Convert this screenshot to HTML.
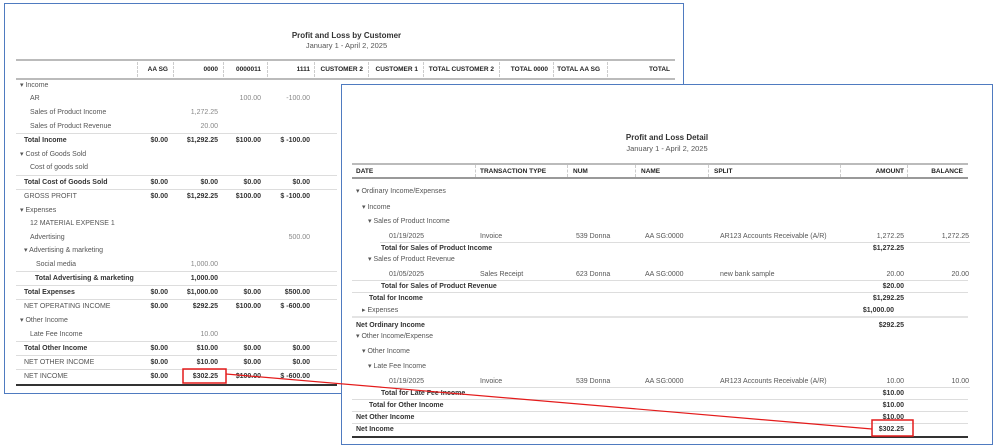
<!DOCTYPE html>
<html><head><meta charset="utf-8"><style>
*{margin:0;padding:0;box-sizing:border-box}
body{width:999px;height:447px;background:#fff;position:relative;overflow:hidden;font-family:"Liberation Sans",sans-serif;font-size:7px;color:#555}
.p{position:absolute;background:#fff;border:1.5px solid #4f7bc0}
.t{position:absolute;white-space:nowrap;line-height:9px}
.r{text-align:right}
.b{font-weight:bold;color:#333}
.h{font-weight:bold;color:#222;font-size:6.5px}
.ln{position:absolute;height:1px;background:#ddd}
.sep{position:absolute;width:0;border-left:1px dashed #ccc}
</style></head><body>

<div class="p" style="left:4px;top:3px;width:680px;height:391px"></div>
<div class="t b" style="left:0;width:693px;top:31px;text-align:center;font-size:8px">Profit and Loss by Customer</div>
<div class="t" style="left:0;width:693px;top:41px;text-align:center;font-size:7.5px">January 1 - April 2, 2025</div>
<div class="ln" style="left:16px;width:659px;top:59px;height:2px;background:#bbb"></div>
<div class="ln" style="left:16px;width:659px;top:78px;height:2px;background:#bbb"></div>
<div class="sep" style="left:137px;top:62px;height:15px"></div>
<div class="sep" style="left:173px;top:62px;height:15px"></div>
<div class="sep" style="left:223px;top:62px;height:15px"></div>
<div class="sep" style="left:267px;top:62px;height:15px"></div>
<div class="sep" style="left:314px;top:62px;height:15px"></div>
<div class="sep" style="left:368px;top:62px;height:15px"></div>
<div class="sep" style="left:423px;top:62px;height:15px"></div>
<div class="sep" style="left:499px;top:62px;height:15px"></div>
<div class="sep" style="left:553px;top:62px;height:15px"></div>
<div class="sep" style="left:607px;top:62px;height:15px"></div>
<div class="t h r" style="left:100px;width:68px;top:65px">AA SG</div>
<div class="t h r" style="left:150px;width:68px;top:65px">0000</div>
<div class="t h r" style="left:193px;width:68px;top:65px">0000011</div>
<div class="t h r" style="left:242px;width:68px;top:65px">1111</div>
<div class="t h r" style="left:265px;width:98px;top:65px">CUSTOMER 2</div>
<div class="t h r" style="left:320px;width:98px;top:65px">CUSTOMER 1</div>
<div class="t h r" style="left:394px;width:100px;top:65px">TOTAL CUSTOMER 2</div>
<div class="t h r" style="left:448px;width:100px;top:65px">TOTAL 0000</div>
<div class="t h r" style="left:500px;width:100px;top:65px">TOTAL AA SG</div>
<div class="t h r" style="left:570px;width:100px;top:65px">TOTAL</div>

<!-- left rows -->
<div class="t" style="left:20px;top:81px">▾ Income</div>
<div class="t" style="left:30px;top:94px">AR</div><div class="t r" style="left:200px;width:61px;top:94px;color:#888">100.00</div><div class="t r" style="left:249px;width:61px;top:94px;color:#888">-100.00</div>
<div class="t" style="left:30px;top:108px">Sales of Product Income</div><div class="t r" style="left:157px;width:61px;top:108px;color:#888">1,272.25</div>
<div class="t" style="left:30px;top:122px">Sales of Product Revenue</div><div class="t r" style="left:157px;width:61px;top:122px;color:#888">20.00</div>
<div class="ln" style="left:16px;width:321px;top:133px"></div>
<div class="t b" style="left:24px;top:136px">Total Income</div>
<div class="t" style="left:20px;top:150px">▾ Cost of Goods Sold</div>
<div class="t" style="left:30px;top:163px">Cost of goods sold</div>
<div class="ln" style="left:16px;width:321px;top:175px"></div>
<div class="t b" style="left:24px;top:178px">Total Cost of Goods Sold</div>
<div class="ln" style="left:16px;width:321px;top:189px"></div>
<div class="t" style="left:24px;top:192px">GROSS PROFIT</div>
<div class="t" style="left:20px;top:206px">▾ Expenses</div>
<div class="t" style="left:30px;top:219px">12 MATERIAL EXPENSE 1</div>
<div class="t" style="left:30px;top:233px">Advertising</div><div class="t r" style="left:249px;width:61px;top:233px;color:#888">500.00</div>
<div class="t" style="left:24px;top:246px">▾ Advertising &amp; marketing</div>
<div class="t" style="left:36px;top:260px">Social media</div><div class="t r" style="left:157px;width:61px;top:260px;color:#888">1,000.00</div>
<div class="ln" style="left:16px;width:321px;top:271px"></div>
<div class="t b" style="left:35px;top:274px">Total Advertising &amp; marketing</div><div class="t b r" style="left:157px;width:61px;top:274px">1,000.00</div>
<div class="ln" style="left:16px;width:321px;top:285px"></div>
<div class="t b" style="left:24px;top:288px">Total Expenses</div>
<div class="ln" style="left:16px;width:321px;top:299px"></div>
<div class="t" style="left:24px;top:302px">NET OPERATING INCOME</div>
<div class="t" style="left:20px;top:316px">▾ Other Income</div>
<div class="t" style="left:30px;top:330px">Late Fee Income</div><div class="t r" style="left:157px;width:61px;top:330px;color:#888">10.00</div>
<div class="ln" style="left:16px;width:321px;top:341px"></div>
<div class="t b" style="left:24px;top:344px">Total Other Income</div>
<div class="ln" style="left:16px;width:321px;top:355px"></div>
<div class="t" style="left:24px;top:358px">NET OTHER INCOME</div>
<div class="ln" style="left:16px;width:321px;top:369px"></div>
<div class="t" style="left:24px;top:372px">NET INCOME</div>
<div class="ln" style="left:16px;width:321px;top:384px;height:2px;background:#333"></div>

<!-- numeric totals -->
<div class="t b r" style="left:107px;width:61px;top:136px">$0.00</div><div class="t b r" style="left:157px;width:61px;top:136px">$1,292.25</div><div class="t b r" style="left:200px;width:61px;top:136px">$100.00</div><div class="t b r" style="left:249px;width:61px;top:136px">$ -100.00</div>
<div class="t b r" style="left:107px;width:61px;top:178px">$0.00</div><div class="t b r" style="left:157px;width:61px;top:178px">$0.00</div><div class="t b r" style="left:200px;width:61px;top:178px">$0.00</div><div class="t b r" style="left:249px;width:61px;top:178px">$0.00</div>
<div class="t b r" style="left:107px;width:61px;top:192px">$0.00</div><div class="t b r" style="left:157px;width:61px;top:192px">$1,292.25</div><div class="t b r" style="left:200px;width:61px;top:192px">$100.00</div><div class="t b r" style="left:249px;width:61px;top:192px">$ -100.00</div>
<div class="t b r" style="left:107px;width:61px;top:288px">$0.00</div><div class="t b r" style="left:157px;width:61px;top:288px">$1,000.00</div><div class="t b r" style="left:200px;width:61px;top:288px">$0.00</div><div class="t b r" style="left:249px;width:61px;top:288px">$500.00</div>
<div class="t b r" style="left:107px;width:61px;top:302px">$0.00</div><div class="t b r" style="left:157px;width:61px;top:302px">$292.25</div><div class="t b r" style="left:200px;width:61px;top:302px">$100.00</div><div class="t b r" style="left:249px;width:61px;top:302px">$ -600.00</div>
<div class="t b r" style="left:107px;width:61px;top:344px">$0.00</div><div class="t b r" style="left:157px;width:61px;top:344px">$10.00</div><div class="t b r" style="left:200px;width:61px;top:344px">$0.00</div><div class="t b r" style="left:249px;width:61px;top:344px">$0.00</div>
<div class="t b r" style="left:107px;width:61px;top:358px">$0.00</div><div class="t b r" style="left:157px;width:61px;top:358px">$10.00</div><div class="t b r" style="left:200px;width:61px;top:358px">$0.00</div><div class="t b r" style="left:249px;width:61px;top:358px">$0.00</div>
<div class="t b r" style="left:107px;width:61px;top:372px">$0.00</div><div class="t b r" style="left:157px;width:61px;top:372px">$302.25</div><div class="t b r" style="left:200px;width:61px;top:372px">$100.00</div><div class="t b r" style="left:249px;width:61px;top:372px">$ -600.00</div>

<!-- right panel -->
<div class="p" style="left:341px;top:84px;width:652px;height:361px"></div>
<div class="t b" style="left:341px;width:652px;top:133px;text-align:center;font-size:8px">Profit and Loss Detail</div>
<div class="t" style="left:341px;width:652px;top:144px;text-align:center;font-size:7.5px">January 1 - April 2, 2025</div>
<div class="ln" style="left:352px;width:616px;top:163px;height:2px;background:#bbb"></div>
<div class="ln" style="left:352px;width:616px;top:177px;height:2px;background:#999"></div>
<div class="sep" style="left:475px;top:165px;height:12px"></div>
<div class="sep" style="left:567px;top:165px;height:12px"></div>
<div class="sep" style="left:635px;top:165px;height:12px"></div>
<div class="sep" style="left:708px;top:165px;height:12px"></div>
<div class="sep" style="left:840px;top:165px;height:12px"></div>
<div class="sep" style="left:907px;top:165px;height:12px"></div>
<div class="t h" style="left:356px;top:167px">DATE</div>
<div class="t h" style="left:480px;top:167px">TRANSACTION TYPE</div>
<div class="t h" style="left:573px;top:167px">NUM</div>
<div class="t h" style="left:641px;top:167px">NAME</div>
<div class="t h" style="left:714px;top:167px">SPLIT</div>
<div class="t h r" style="left:840px;width:64px;top:167px">AMOUNT</div>
<div class="t h r" style="left:900px;width:63px;top:167px">BALANCE</div>

<div class="t" style="left:356px;top:187px">▾ Ordinary Income/Expenses</div>
<div class="t" style="left:362px;top:203px">▾ Income</div>
<div class="t" style="left:368px;top:217px">▾ Sales of Product Income</div>
<div class="t" style="left:389px;top:232px">01/19/2025</div><div class="t" style="left:480px;top:232px">Invoice</div><div class="t" style="left:576px;top:232px">539 Donna</div><div class="t" style="left:645px;top:232px">AA SG:0000</div><div class="t" style="left:720px;top:232px">AR123 Accounts Receivable (A/R)</div><div class="t r" style="left:840px;width:64px;top:232px">1,272.25</div><div class="t r" style="left:900px;width:69px;top:232px">1,272.25</div>
<div class="ln" style="left:380px;width:590px;top:242px"></div>
<div class="t b" style="left:381px;top:244px">Total for Sales of Product Income</div><div class="t b r" style="left:840px;width:64px;top:244px">$1,272.25</div>
<div class="t" style="left:368px;top:255px">▾ Sales of Product Revenue</div>
<div class="t" style="left:389px;top:270px">01/05/2025</div><div class="t" style="left:480px;top:270px">Sales Receipt</div><div class="t" style="left:576px;top:270px">623 Donna</div><div class="t" style="left:645px;top:270px">AA SG:0000</div><div class="t" style="left:720px;top:270px">new bank sample</div><div class="t r" style="left:840px;width:64px;top:270px">20.00</div><div class="t r" style="left:900px;width:69px;top:270px">20.00</div>
<div class="ln" style="left:352px;width:616px;top:280px"></div>
<div class="t b" style="left:381px;top:282px">Total for Sales of Product Revenue</div><div class="t b r" style="left:840px;width:64px;top:282px">$20.00</div>
<div class="ln" style="left:352px;width:616px;top:292px"></div>
<div class="t b" style="left:369px;top:294px">Total for Income</div><div class="t b r" style="left:840px;width:64px;top:294px">$1,292.25</div>
<div class="t" style="left:362px;top:306px">▸ Expenses</div><div class="t b r" style="left:830px;width:64px;top:306px">$1,000.00</div>
<div class="ln" style="left:352px;width:616px;top:316px;height:2px;background:#e4e4e4"></div>
<div class="t b" style="left:356px;top:321px">Net Ordinary Income</div><div class="t b r" style="left:840px;width:64px;top:321px">$292.25</div>
<div class="t" style="left:356px;top:332px">▾ Other Income/Expense</div>
<div class="t" style="left:362px;top:347px">▾ Other Income</div>
<div class="t" style="left:368px;top:362px">▾ Late Fee Income</div>
<div class="t" style="left:389px;top:377px">01/19/2025</div><div class="t" style="left:480px;top:377px">Invoice</div><div class="t" style="left:576px;top:377px">539 Donna</div><div class="t" style="left:645px;top:377px">AA SG:0000</div><div class="t" style="left:720px;top:377px">AR123 Accounts Receivable (A/R)</div><div class="t r" style="left:840px;width:64px;top:377px">10.00</div><div class="t r" style="left:900px;width:69px;top:377px">10.00</div>
<div class="ln" style="left:380px;width:590px;top:387px"></div>
<div class="t b" style="left:381px;top:389px">Total for Late Fee Income</div><div class="t b r" style="left:840px;width:64px;top:389px">$10.00</div>
<div class="ln" style="left:352px;width:616px;top:399px"></div>
<div class="t b" style="left:369px;top:401px">Total for Other Income</div><div class="t b r" style="left:840px;width:64px;top:401px">$10.00</div>
<div class="ln" style="left:352px;width:616px;top:411px"></div>
<div class="t b" style="left:356px;top:413px">Net Other Income</div><div class="t b r" style="left:840px;width:64px;top:413px">$10.00</div>
<div class="ln" style="left:352px;width:616px;top:423px"></div>
<div class="t b" style="left:356px;top:425px">Net Income</div><div class="t b r" style="left:840px;width:64px;top:425px">$302.25</div>
<div class="ln" style="left:352px;width:616px;top:436px;height:2px;background:#333"></div>

<svg style="position:absolute;left:0;top:0" width="999" height="447">
<rect x="183" y="369" width="43" height="14" fill="none" stroke="#e41b1b" stroke-width="1.5"/>
<rect x="872" y="420" width="41" height="16" fill="none" stroke="#e41b1b" stroke-width="1.5"/>
<line x1="226" y1="374" x2="872" y2="429" stroke="#e41b1b" stroke-width="1.2"/>
</svg>
</body></html>
